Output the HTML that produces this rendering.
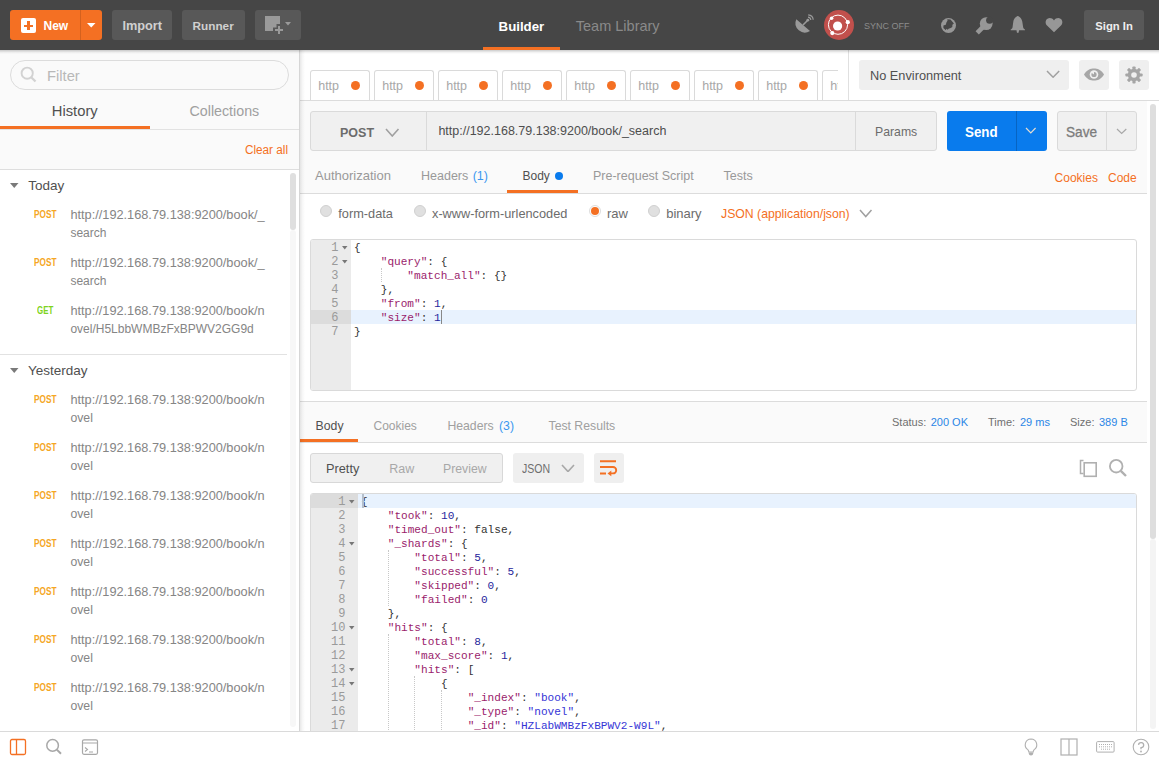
<!DOCTYPE html><html><head><meta charset="utf-8"><style>*{margin:0;padding:0;box-sizing:border-box}
html,body{width:1159px;height:762px;overflow:hidden;background:#fff;font-family:"Liberation Sans",sans-serif}
body div,body span,body svg{position:absolute}
.t{white-space:nowrap;line-height:1}
.ln{font-family:"Liberation Mono",monospace;font-size:12px;line-height:14px;color:#9a9a9a;text-align:right}
.code{font-family:"Liberation Mono",monospace;font-size:11.10px;line-height:14px;color:#333;white-space:pre}
.code span{position:static}
</style></head><body><div style="left:0px;top:0px;width:1159px;height:50px;background:#464646"></div>
<div style="left:10px;top:10px;width:92px;height:30px;background:#f47023;border-radius:3px"></div>
<div style="left:79.5px;top:10px;width:1px;height:30px;background:rgba(0,0,0,.13)"></div>
<div style="left:21px;top:18px;width:15px;height:15px;background:#fff;border-radius:2px"></div>
<div style="left:24px;top:24.5px;width:9px;height:2.6px;background:#f47023"></div>
<div style="left:27.2px;top:21.2px;width:2.6px;height:9px;background:#f47023"></div>
<svg style="left:87px;top:23px" width="9" height="5"><path d="M0 0H8.5L4.25 4.5Z" fill="#fff"/></svg>
<span class="t" style="left:43.50px;top:20.00px;font-size:12.00px;font-weight:bold;color:#fff;">New</span>
<div style="left:112px;top:10px;width:60px;height:30px;background:#585858;border-radius:3px"></div>
<span class="t" style="left:122.40px;top:20.00px;font-size:12.75px;font-weight:bold;color:#d0d0d0;">Import</span>
<div style="left:182px;top:10px;width:63px;height:30px;background:#585858;border-radius:3px"></div>
<span class="t" style="left:192.60px;top:20.00px;font-size:11.75px;font-weight:bold;color:#d0d0d0;">Runner</span>
<div style="left:255px;top:10px;width:46px;height:30px;background:#585858;border-radius:3px"></div>
<svg style="left:255px;top:10px" width="46" height="30"><path d="M10 6H25V14H21.5V17.5H18V21H10Z" fill="#9a9a9a"/><path d="M20 20H28M24 16V24" stroke="#9a9a9a" stroke-width="2"/><path d="M30 12H36L33 15.5Z" fill="#9a9a9a"/></svg>
<span class="t" style="left:498.60px;top:20.00px;font-size:13.25px;font-weight:bold;color:#fff;">Builder</span>
<div style="left:483px;top:47px;width:77px;height:3px;background:#f47023"></div>
<span class="t" style="left:575.80px;top:19.00px;font-size:14.50px;color:#8a8a8a;">Team Library</span>
<svg style="left:793px;top:14px" width="22" height="22"><path d="M3.3 5.3A9.4 9.4 0 0 0 17 17Z" fill="#9a9a9a"/><path d="M10 11L14.5 6.5" stroke="#9a9a9a" stroke-width="1.6"/><circle cx="14.8" cy="6.2" r="1.4" fill="#9a9a9a"/><path d="M15 3.2A3 3 0 0 1 17.8 6M15.2 0.8A5.4 5.4 0 0 1 20.2 5.8" stroke="#9a9a9a" stroke-width="1.2" fill="none"/></svg>
<svg style="left:824px;top:10px" width="30" height="30"><circle cx="15" cy="15" r="15" fill="#c1504c"/><circle cx="14" cy="14.7" r="9.6" fill="none" stroke="#fff" stroke-width="1"/><circle cx="13.6" cy="16" r="4.6" fill="#fff"/><circle cx="7.6" cy="8.3" r="1.8" fill="#fff"/><circle cx="23.8" cy="12.2" r="2.1" fill="#fff"/><circle cx="8.3" cy="23.1" r="2.1" fill="#fff"/></svg>
<span class="t" style="left:864.00px;top:22.00px;font-size:9.00px;color:#8c8c8c;">SYNC OFF</span>
<svg style="left:940px;top:17px" width="17" height="17"><circle cx="8.5" cy="8.5" r="7.5" fill="#979797"/><path d="M7.3 2.2L10.5 2.4 13.9 6.4 12.4 7.8 12.3 10 10.7 11.1 8.6 11.8 7.6 12.8 6.3 11.8 5.9 13.3 3.4 11.1 3.4 8.6 5.8 7.8 6.5 5.3 7.5 3.8Z" fill="#464646"/></svg>
<svg style="left:974px;top:16px" width="20" height="20"><circle cx="12.2" cy="7.6" r="6.4" fill="#979797"/><path d="M10.5 9.5L3.2 16.8" stroke="#979797" stroke-width="4.6"/><circle cx="15.6" cy="4.3" r="3.5" fill="#464646"/></svg>
<svg style="left:1010px;top:15px" width="16" height="19"><path d="M7.8 1C9.6 1.3 12 4 12.3 6.8L13.2 12.4C13.5 13.6 14.4 14 15 14.4V15.3H0.7V14.4C1.3 14 2.2 13.6 2.5 12.4L3.3 6.8C3.6 4 6 1.3 7.8 1Z" fill="#979797"/><path d="M6.5 15H9.1L8.7 17.6Q7.8 18.4 6.9 17.6Z" fill="#979797"/></svg>
<svg style="left:1045px;top:17px" width="18" height="16"><path d="M9 15.2L2 8.5C0 6.5 0.3 3 2.5 1.7 4.6 0.5 7.3 1 9 3.5 10.7 1 13.4 0.5 15.5 1.7 17.7 3 18 6.5 16 8.5Z" fill="#979797"/></svg>
<div style="left:1084px;top:10px;width:60px;height:30px;background:#585858;border-radius:3px"></div>
<span class="t" style="left:1095.30px;top:21.00px;font-size:11.25px;font-weight:bold;color:#eeeeee;">Sign In</span>
<div style="left:0px;top:50px;width:299px;height:120px;background:#fafafa"></div>
<div style="left:10px;top:60px;width:279px;height:30px;border:1px solid #dcdcdc;border-radius:15px;background:#fafafa"></div>
<svg style="left:20px;top:66px" width="17" height="17"><circle cx="7.2" cy="7.2" r="5.6" fill="none" stroke="#d2d2d2" stroke-width="1.9"/><path d="M11.2 11.2L15.5 15.5" stroke="#d2d2d2" stroke-width="2.3"/></svg>
<span class="t" style="left:47.00px;top:69.00px;font-size:14.75px;color:#b8b8b8;">Filter</span>
<span class="t" style="left:51.80px;top:104.00px;font-size:14.75px;color:#505050;">History</span>
<span class="t" style="left:189.50px;top:104.00px;font-size:14.25px;color:#a0a0a0;">Collections</span>
<div style="left:0px;top:129px;width:299px;height:1px;background:#e2e2e2"></div>
<div style="left:0px;top:126px;width:150px;height:3px;background:#f47023"></div>
<span class="t" style="left:244.60px;top:144.00px;font-size:12.50px;color:#f47023;transform:scaleX(0.938);transform-origin:0 0;">Clear all</span>
<div style="left:0px;top:169px;width:299px;height:1px;background:#dedede"></div>
<div style="left:0px;top:170px;width:299px;height:561px;background:#fff"></div>
<div style="left:290px;top:230px;width:6px;height:497px;background:#f7f7f7;border-radius:3px"></div>
<div style="left:290px;top:173px;width:6px;height:57px;background:#dfdfdf;border-radius:3px"></div>
<svg style="left:10px;top:183.3px" width="9" height="6"><path d="M0 0H8.5L4.25 5Z" fill="#7a7a7a"/></svg>
<span class="t" style="left:28.30px;top:179.00px;font-size:13.50px;color:#505050;">Today</span>
<span class="t" style="left:33.90px;top:210.00px;font-size:10.00px;font-weight:bold;color:#f5a623;transform:scaleX(0.823);transform-origin:0 0;">POST</span>
<span class="t" style="left:70.40px;top:209.00px;font-size:12.75px;color:#858585;">http://192.168.79.138:9200/book/_</span>
<span class="t" style="left:70.40px;top:227.00px;font-size:12.00px;color:#858585;">search</span>
<span class="t" style="left:33.90px;top:258.00px;font-size:10.00px;font-weight:bold;color:#f5a623;transform:scaleX(0.823);transform-origin:0 0;">POST</span>
<span class="t" style="left:70.40px;top:257.00px;font-size:12.75px;color:#858585;">http://192.168.79.138:9200/book/_</span>
<span class="t" style="left:70.40px;top:275.00px;font-size:12.00px;color:#858585;">search</span>
<span class="t" style="left:36.80px;top:306.00px;font-size:10.00px;font-weight:bold;color:#7ed321;transform:scaleX(0.792);transform-origin:0 0;">GET</span>
<span class="t" style="left:70.40px;top:305.00px;font-size:12.75px;color:#858585;">http://192.168.79.138:9200/book/n</span>
<span class="t" style="left:70.40px;top:323.00px;font-size:12.00px;color:#858585;">ovel/H5LbbWMBzFxBPWV2GG9d</span>
<div style="left:0px;top:354px;width:287px;height:1px;background:#e2e2e2"></div>
<svg style="left:10px;top:368px" width="9" height="6"><path d="M0 0H8.5L4.25 5Z" fill="#7a7a7a"/></svg>
<span class="t" style="left:28.00px;top:364.00px;font-size:13.50px;color:#505050;">Yesterday</span>
<span class="t" style="left:33.90px;top:395.00px;font-size:10.00px;font-weight:bold;color:#f5a623;transform:scaleX(0.823);transform-origin:0 0;">POST</span>
<span class="t" style="left:70.40px;top:394.00px;font-size:12.75px;color:#858585;">http://192.168.79.138:9200/book/n</span>
<span class="t" style="left:70.40px;top:412.00px;font-size:12.25px;color:#858585;">ovel</span>
<span class="t" style="left:33.90px;top:443.00px;font-size:10.00px;font-weight:bold;color:#f5a623;transform:scaleX(0.823);transform-origin:0 0;">POST</span>
<span class="t" style="left:70.40px;top:442.00px;font-size:12.75px;color:#858585;">http://192.168.79.138:9200/book/n</span>
<span class="t" style="left:70.40px;top:460.00px;font-size:12.25px;color:#858585;">ovel</span>
<span class="t" style="left:33.90px;top:491.00px;font-size:10.00px;font-weight:bold;color:#f5a623;transform:scaleX(0.823);transform-origin:0 0;">POST</span>
<span class="t" style="left:70.40px;top:490.00px;font-size:12.75px;color:#858585;">http://192.168.79.138:9200/book/n</span>
<span class="t" style="left:70.40px;top:508.00px;font-size:12.25px;color:#858585;">ovel</span>
<span class="t" style="left:33.90px;top:539.00px;font-size:10.00px;font-weight:bold;color:#f5a623;transform:scaleX(0.823);transform-origin:0 0;">POST</span>
<span class="t" style="left:70.40px;top:538.00px;font-size:12.75px;color:#858585;">http://192.168.79.138:9200/book/n</span>
<span class="t" style="left:70.40px;top:556.00px;font-size:12.25px;color:#858585;">ovel</span>
<span class="t" style="left:33.90px;top:587.00px;font-size:10.00px;font-weight:bold;color:#f5a623;transform:scaleX(0.823);transform-origin:0 0;">POST</span>
<span class="t" style="left:70.40px;top:586.00px;font-size:12.75px;color:#858585;">http://192.168.79.138:9200/book/n</span>
<span class="t" style="left:70.40px;top:604.00px;font-size:12.25px;color:#858585;">ovel</span>
<span class="t" style="left:33.90px;top:635.00px;font-size:10.00px;font-weight:bold;color:#f5a623;transform:scaleX(0.823);transform-origin:0 0;">POST</span>
<span class="t" style="left:70.40px;top:634.00px;font-size:12.75px;color:#858585;">http://192.168.79.138:9200/book/n</span>
<span class="t" style="left:70.40px;top:652.00px;font-size:12.25px;color:#858585;">ovel</span>
<span class="t" style="left:33.90px;top:683.00px;font-size:10.00px;font-weight:bold;color:#f5a623;transform:scaleX(0.823);transform-origin:0 0;">POST</span>
<span class="t" style="left:70.40px;top:682.00px;font-size:12.75px;color:#858585;">http://192.168.79.138:9200/book/n</span>
<span class="t" style="left:70.40px;top:700.00px;font-size:12.25px;color:#858585;">ovel</span>
<div style="left:300px;top:50px;width:859px;height:50px;background:#fff"></div>
<div style="left:300px;top:50px;width:538px;height:51px;overflow:hidden">
<div style="left:10px;top:20px;width:60px;height:31px;border:1px solid #dadada;border-bottom:none;border-radius:3px 3px 0 0;background:#fff"></div>
<div style="left:51px;top:31px;width:9px;height:9px;border-radius:50%;background:#f47023"></div>
<span class="t" style="left:18.20px;top:30.00px;font-size:12.50px;color:#a8a8a8;">http</span>
<div style="left:74px;top:20px;width:60px;height:31px;border:1px solid #dadada;border-bottom:none;border-radius:3px 3px 0 0;background:#fff"></div>
<div style="left:115px;top:31px;width:9px;height:9px;border-radius:50%;background:#f47023"></div>
<span class="t" style="left:82.20px;top:30.00px;font-size:12.50px;color:#a8a8a8;">http</span>
<div style="left:138px;top:20px;width:60px;height:31px;border:1px solid #dadada;border-bottom:none;border-radius:3px 3px 0 0;background:#fff"></div>
<div style="left:179px;top:31px;width:9px;height:9px;border-radius:50%;background:#f47023"></div>
<span class="t" style="left:146.20px;top:30.00px;font-size:12.50px;color:#a8a8a8;">http</span>
<div style="left:202px;top:20px;width:60px;height:31px;border:1px solid #dadada;border-bottom:none;border-radius:3px 3px 0 0;background:#fff"></div>
<div style="left:243px;top:31px;width:9px;height:9px;border-radius:50%;background:#f47023"></div>
<span class="t" style="left:210.20px;top:30.00px;font-size:12.50px;color:#a8a8a8;">http</span>
<div style="left:266px;top:20px;width:60px;height:31px;border:1px solid #dadada;border-bottom:none;border-radius:3px 3px 0 0;background:#fff"></div>
<div style="left:307px;top:31px;width:9px;height:9px;border-radius:50%;background:#f47023"></div>
<span class="t" style="left:274.20px;top:30.00px;font-size:12.50px;color:#a8a8a8;">http</span>
<div style="left:330px;top:20px;width:60px;height:31px;border:1px solid #dadada;border-bottom:none;border-radius:3px 3px 0 0;background:#fff"></div>
<div style="left:371px;top:31px;width:9px;height:9px;border-radius:50%;background:#f47023"></div>
<span class="t" style="left:338.20px;top:30.00px;font-size:12.50px;color:#a8a8a8;">http</span>
<div style="left:394px;top:20px;width:60px;height:31px;border:1px solid #dadada;border-bottom:none;border-radius:3px 3px 0 0;background:#fff"></div>
<div style="left:435px;top:31px;width:9px;height:9px;border-radius:50%;background:#f47023"></div>
<span class="t" style="left:402.20px;top:30.00px;font-size:12.50px;color:#a8a8a8;">http</span>
<div style="left:458px;top:20px;width:60px;height:31px;border:1px solid #dadada;border-bottom:none;border-radius:3px 3px 0 0;background:#fff"></div>
<div style="left:499px;top:31px;width:9px;height:9px;border-radius:50%;background:#f47023"></div>
<span class="t" style="left:466.20px;top:30.00px;font-size:12.50px;color:#a8a8a8;">http</span>
<div style="left:522px;top:20px;width:60px;height:31px;border:1px solid #dadada;border-bottom:none;border-radius:3px 3px 0 0;background:#fff"></div>
<div style="left:563px;top:31px;width:9px;height:9px;border-radius:50%;background:#f47023"></div>
<span class="t" style="left:530.20px;top:30.00px;font-size:12.50px;color:#a8a8a8;">http</span>
</div>
<div style="left:300px;top:100px;width:859px;height:1px;background:#dcdcdc"></div>
<div style="left:848px;top:50px;width:1px;height:50px;background:#e0e0e0"></div>
<div style="left:859px;top:60px;width:210px;height:30px;background:#efefef;border-radius:3px"></div>
<span class="t" style="left:870.00px;top:70.00px;font-size:12.75px;color:#505050;">No Environment</span>
<svg style="left:1046.3px;top:70px" width="14.2" height="8.2"><path d="M1 1L7.1 7.2L13.2 1" fill="none" stroke="#a0a0a0" stroke-width="1.5"/></svg>
<div style="left:1079px;top:60px;width:30px;height:30px;background:#efefef;border-radius:3px"></div>
<svg style="left:1083px;top:68px" width="22" height="13"><path d="M1 6.5C4 1.5 7.5 0.5 11 0.5S18 1.5 21 6.5C18 11.5 14.5 12.5 11 12.5S4 11.5 1 6.5Z" fill="#a6a6a6"/><circle cx="11" cy="6.5" r="4.3" fill="#efefef"/><circle cx="11" cy="6.5" r="2.6" fill="#a6a6a6"/><path d="M11 6.5V3.2A3.3 3.3 0 0 0 8 4.5Z" fill="#efefef"/></svg>
<div style="left:1119px;top:60px;width:30px;height:30px;background:#efefef;border-radius:3px"></div>
<svg style="left:1125px;top:66px" width="18" height="18"><g transform="translate(9 9)" fill="#a6a6a6"><circle r="6.2"/><rect x="-1.6" y="-8.6" width="3.2" height="4" rx="0.8" transform="rotate(0)"/><rect x="-1.6" y="-8.6" width="3.2" height="4" rx="0.8" transform="rotate(45)"/><rect x="-1.6" y="-8.6" width="3.2" height="4" rx="0.8" transform="rotate(90)"/><rect x="-1.6" y="-8.6" width="3.2" height="4" rx="0.8" transform="rotate(135)"/><rect x="-1.6" y="-8.6" width="3.2" height="4" rx="0.8" transform="rotate(180)"/><rect x="-1.6" y="-8.6" width="3.2" height="4" rx="0.8" transform="rotate(225)"/><rect x="-1.6" y="-8.6" width="3.2" height="4" rx="0.8" transform="rotate(270)"/><rect x="-1.6" y="-8.6" width="3.2" height="4" rx="0.8" transform="rotate(315)"/><circle r="2.8" fill="#efefef"/></g></svg>
<div style="left:300px;top:101px;width:847px;height:92px;background:#fafafa"></div>
<div style="left:310px;top:111px;width:627px;height:40px;background:#f0f0f0;border:1px solid #dadada;border-radius:3px"></div>
<div style="left:426px;top:111px;width:1px;height:40px;background:#dadada"></div>
<div style="left:855px;top:111px;width:1px;height:40px;background:#dadada"></div>
<span class="t" style="left:340.00px;top:127.00px;font-size:12.50px;font-weight:bold;color:#6c6c6c;">POST</span>
<svg style="left:385px;top:127.5px" width="14.5" height="9"><path d="M1 1L7.25 8L13.5 1" fill="none" stroke="#a0a0a0" stroke-width="1.6"/></svg>
<span class="t" style="left:438.40px;top:125.00px;font-size:12.50px;color:#4e4e4e;">http://192.168.79.138:9200/book/_search</span>
<span class="t" style="left:875.00px;top:126.00px;font-size:12.25px;color:#6c6c6c;">Params</span>
<div style="left:947px;top:111px;width:100px;height:40px;background:#097bed;border-radius:3px"></div>
<div style="left:1016px;top:111px;width:1px;height:40px;background:rgba(0,0,0,.18)"></div>
<span class="t" style="left:965.00px;top:125.00px;font-size:14.00px;font-weight:bold;color:#fff;transform:scaleX(0.953);transform-origin:0 0;">Send</span>
<svg style="left:1024.8px;top:126.8px" width="11.6" height="6.8"><path d="M1 1L5.8 5.8L10.6 1" fill="none" stroke="#e6ddd0" stroke-width="1.2"/></svg>
<div style="left:1057px;top:111px;width:80px;height:40px;background:#f0f0f0;border:1px solid #dadada;border-radius:3px"></div>
<div style="left:1106px;top:111px;width:1px;height:40px;background:#dadada"></div>
<span class="t" style="left:1066.40px;top:126.00px;font-size:13.75px;color:#7c7c7c;transform:scaleX(0.992);transform-origin:0 0;-webkit-text-stroke:0.3px #7c7c7c;">Save</span>
<svg style="left:1116px;top:128px" width="11.3" height="6.5"><path d="M1 1L5.65 5.5L10.3 1" fill="none" stroke="#a8a8a8" stroke-width="1.2"/></svg>
<span class="t" style="left:1054.60px;top:172.00px;font-size:12.00px;color:#f47023;">Cookies</span>
<span class="t" style="left:1108.00px;top:172.00px;font-size:12.00px;color:#f47023;">Code</span>
<span class="t" style="left:315.00px;top:169.00px;font-size:13.00px;color:#999999;">Authorization</span>
<span class="t" style="left:421.00px;top:170.00px;font-size:12.50px;color:#999999;">Headers</span>
<span class="t" style="left:472.70px;top:170.00px;font-size:12.50px;color:#3a98f0;">(1)</span>
<span class="t" style="left:522.50px;top:170.00px;font-size:12.00px;color:#505050;">Body</span>
<div style="left:554.6px;top:172px;width:8px;height:8px;background:#097bed;border-radius:50%"></div>
<span class="t" style="left:593.00px;top:170.00px;font-size:12.50px;color:#999999;">Pre-request Script</span>
<span class="t" style="left:723.50px;top:170.00px;font-size:12.50px;color:#999999;">Tests</span>
<div style="left:507px;top:190px;width:71px;height:3px;background:#f47023"></div>
<div style="left:300px;top:193px;width:847px;height:1px;background:#dcdcdc"></div>
<div style="left:320px;top:205px;width:12px;height:12px;border-radius:50%;background:#e0e0e0;border:1px solid #d0d0d0"></div>
<div style="left:414px;top:205px;width:12px;height:12px;border-radius:50%;background:#e0e0e0;border:1px solid #d0d0d0"></div>
<div style="left:589px;top:205px;width:12px;height:12px;border-radius:50%;background:#fff;border:1px solid #ddd"></div>
<div style="left:591px;top:207px;width:8px;height:8px;border-radius:50%;background:#f47023"></div>
<div style="left:648px;top:205px;width:12px;height:12px;border-radius:50%;background:#e0e0e0;border:1px solid #d0d0d0"></div>
<span class="t" style="left:338.30px;top:208.00px;font-size:12.75px;color:#6c6c6c;">form-data</span>
<span class="t" style="left:432.00px;top:208.00px;font-size:12.75px;color:#6c6c6c;">x-www-form-urlencoded</span>
<span class="t" style="left:607.00px;top:207.00px;font-size:13.00px;color:#6c6c6c;">raw</span>
<span class="t" style="left:666.20px;top:207.00px;font-size:13.00px;color:#6c6c6c;">binary</span>
<span class="t" style="left:721.00px;top:208.00px;font-size:12.25px;color:#f47023;">JSON (application/json)</span>
<svg style="left:859px;top:209.3px" width="13.5" height="8.5"><path d="M1 1L6.75 7.5L12.5 1" fill="none" stroke="#a0a0a0" stroke-width="1.5"/></svg>
<div style="left:310px;top:239px;width:827px;height:152px;border:1px solid #dadada;border-radius:3px;background:#fff;overflow:hidden">
<div style="left:0;top:0;width:40px;height:152px;background:#ebebeb"></div>
<div style="left:0;top:70px;width:40px;height:14px;background:#dcdcdc"></div>
<div style="left:40px;top:70px;width:827px;height:14px;background:#e8f2fe"></div>
<div style="left:69.6px;top:28px;width:0;height:14px;border-left:1px dotted #c8c8c8"></div>
<div class="ln" style="left:0;top:1px;width:27.5px">1</div>
<svg style="left:30.7px;top:6px" width="6" height="4"><path d="M0 0H5.5L2.75 3.6Z" fill="#777"/></svg>
<div class="code" style="left:43.1px;top:1px">{</div>
<div class="ln" style="left:0;top:15px;width:27.5px">2</div>
<svg style="left:30.7px;top:20px" width="6" height="4"><path d="M0 0H5.5L2.75 3.6Z" fill="#777"/></svg>
<div class="code" style="left:43.1px;top:15px">    <span style="color:#9a1c6c">"query"</span>: {</div>
<div class="ln" style="left:0;top:29px;width:27.5px">3</div>
<div class="code" style="left:43.1px;top:29px">        <span style="color:#9a1c6c">"match_all"</span>: {}</div>
<div class="ln" style="left:0;top:43px;width:27.5px">4</div>
<div class="code" style="left:43.1px;top:43px">    },</div>
<div class="ln" style="left:0;top:57px;width:27.5px">5</div>
<div class="code" style="left:43.1px;top:57px">    <span style="color:#9a1c6c">"from"</span>: <span style="color:#26269c">1</span>,</div>
<div class="ln" style="left:0;top:71px;width:27.5px">6</div>
<div class="code" style="left:43.1px;top:71px">    <span style="color:#9a1c6c">"size"</span>: <span style="color:#26269c">1</span></div>
<div class="ln" style="left:0;top:85px;width:27.5px">7</div>
<div class="code" style="left:43.1px;top:85px">}</div>
</div>
<div style="left:441px;top:310px;width:1px;height:14px;background:#888"></div>
<div style="left:300px;top:401px;width:847px;height:1px;background:#dcdcdc"></div>
<div style="left:300px;top:402px;width:847px;height:40px;background:#fafafa"></div>
<div style="left:300px;top:442px;width:847px;height:1px;background:#dcdcdc"></div>
<div style="left:300px;top:439px;width:58px;height:3px;background:#f47023"></div>
<span class="t" style="left:315.60px;top:420.00px;font-size:12.25px;color:#505050;">Body</span>
<span class="t" style="left:373.50px;top:420.00px;font-size:12.00px;color:#a0a0a0;">Cookies</span>
<span class="t" style="left:447.40px;top:420.00px;font-size:12.25px;color:#a0a0a0;">Headers</span>
<span class="t" style="left:499.00px;top:420.00px;font-size:12.25px;color:#3a98f0;">(3)</span>
<span class="t" style="left:548.50px;top:420.00px;font-size:12.25px;color:#a0a0a0;">Test Results</span>
<span class="t" style="left:892.00px;top:417.00px;font-size:11.00px;color:#707070;">Status:</span>
<span class="t" style="left:930.70px;top:417.00px;font-size:11.00px;color:#2b86e6;">200 OK</span>
<span class="t" style="left:988.00px;top:417.00px;font-size:11.00px;color:#707070;">Time:</span>
<span class="t" style="left:1020.00px;top:417.00px;font-size:11.00px;color:#2b86e6;">29 ms</span>
<span class="t" style="left:1070.00px;top:417.00px;font-size:11.00px;color:#707070;">Size:</span>
<span class="t" style="left:1099.00px;top:417.00px;font-size:11.00px;color:#2b86e6;">389 B</span>
<div style="left:310px;top:453px;width:193px;height:30px;background:#f0f0f0;border:1px solid #d8d8d8;border-radius:3px"></div>
<span class="t" style="left:326.00px;top:463.00px;font-size:12.75px;color:#505050;">Pretty</span>
<span class="t" style="left:389.20px;top:463.00px;font-size:12.50px;color:#a8a8a8;">Raw</span>
<span class="t" style="left:443.00px;top:463.00px;font-size:12.25px;color:#a8a8a8;">Preview</span>
<div style="left:513px;top:453px;width:71px;height:30px;background:#efefef;border-radius:3px"></div>
<span class="t" style="left:522.30px;top:463.00px;font-size:12.00px;color:#6e6e6e;transform:scaleX(0.879);transform-origin:0 0;">JSON</span>
<svg style="left:561.3px;top:463.6px" width="14" height="8.6"><path d="M1 1L7.0 7.6L13 1" fill="none" stroke="#a8a8a8" stroke-width="1.6"/></svg>
<div style="left:594px;top:453px;width:30px;height:30px;background:#efefef;border-radius:3px"></div>
<svg style="left:594px;top:453px" width="30" height="30"><path d="M6 8.3H22M6 14H19A3.2 3.2 0 0 1 19 20.4H16.5M6 20.5H12" fill="none" stroke="#f47023" stroke-width="1.9"/><path d="M13.5 20.4L17.3 17.6V23.2Z" fill="#f47023"/></svg>
<svg style="left:1079px;top:458px" width="20" height="20"><path d="M4.5 2.5H1.5V15.5H4.5" fill="none" stroke="#b0b0b0" stroke-width="1.5"/><rect x="5.2" y="4.8" width="12" height="13.5" fill="none" stroke="#b0b0b0" stroke-width="1.6"/></svg>
<svg style="left:1108px;top:458px" width="20" height="20"><circle cx="8.2" cy="8.2" r="6.3" fill="none" stroke="#b0b0b0" stroke-width="1.8"/><path d="M12.8 12.8L18 18" stroke="#b0b0b0" stroke-width="2.4"/></svg>
<div style="left:310px;top:493px;width:827px;height:260px;border:1px solid #dadada;border-radius:3px;background:#fff;overflow:hidden">
<div style="left:0;top:0;width:47px;height:260px;background:#ebebeb"></div>
<div style="left:0;top:0px;width:47px;height:14px;background:#dcdcdc"></div>
<div style="left:47px;top:0px;width:827px;height:14px;background:#e8f2fe"></div>
<div style="left:76.6px;top:56px;width:0;height:56px;border-left:1px dotted #c8c8c8"></div>
<div style="left:76.6px;top:140px;width:0;height:112px;border-left:1px dotted #c8c8c8"></div>
<div style="left:103.3px;top:182px;width:0;height:70px;border-left:1px dotted #c8c8c8"></div>
<div style="left:129.9px;top:196px;width:0;height:56px;border-left:1px dotted #c8c8c8"></div>
<div class="ln" style="left:0;top:1px;width:34.5px">1</div>
<svg style="left:37.7px;top:6px" width="6" height="4"><path d="M0 0H5.5L2.75 3.6Z" fill="#777"/></svg>
<div class="code" style="left:50.1px;top:1px">{</div>
<div class="ln" style="left:0;top:15px;width:34.5px">2</div>
<div class="code" style="left:50.1px;top:15px">    <span style="color:#9a1c6c">"took"</span>: <span style="color:#26269c">10</span>,</div>
<div class="ln" style="left:0;top:29px;width:34.5px">3</div>
<div class="code" style="left:50.1px;top:29px">    <span style="color:#9a1c6c">"timed_out"</span>: false,</div>
<div class="ln" style="left:0;top:43px;width:34.5px">4</div>
<svg style="left:37.7px;top:48px" width="6" height="4"><path d="M0 0H5.5L2.75 3.6Z" fill="#777"/></svg>
<div class="code" style="left:50.1px;top:43px">    <span style="color:#9a1c6c">"_shards"</span>: {</div>
<div class="ln" style="left:0;top:57px;width:34.5px">5</div>
<div class="code" style="left:50.1px;top:57px">        <span style="color:#9a1c6c">"total"</span>: <span style="color:#26269c">5</span>,</div>
<div class="ln" style="left:0;top:71px;width:34.5px">6</div>
<div class="code" style="left:50.1px;top:71px">        <span style="color:#9a1c6c">"successful"</span>: <span style="color:#26269c">5</span>,</div>
<div class="ln" style="left:0;top:85px;width:34.5px">7</div>
<div class="code" style="left:50.1px;top:85px">        <span style="color:#9a1c6c">"skipped"</span>: <span style="color:#26269c">0</span>,</div>
<div class="ln" style="left:0;top:99px;width:34.5px">8</div>
<div class="code" style="left:50.1px;top:99px">        <span style="color:#9a1c6c">"failed"</span>: <span style="color:#26269c">0</span></div>
<div class="ln" style="left:0;top:113px;width:34.5px">9</div>
<div class="code" style="left:50.1px;top:113px">    },</div>
<div class="ln" style="left:0;top:127px;width:34.5px">10</div>
<svg style="left:37.7px;top:132px" width="6" height="4"><path d="M0 0H5.5L2.75 3.6Z" fill="#777"/></svg>
<div class="code" style="left:50.1px;top:127px">    <span style="color:#9a1c6c">"hits"</span>: {</div>
<div class="ln" style="left:0;top:141px;width:34.5px">11</div>
<div class="code" style="left:50.1px;top:141px">        <span style="color:#9a1c6c">"total"</span>: <span style="color:#26269c">8</span>,</div>
<div class="ln" style="left:0;top:155px;width:34.5px">12</div>
<div class="code" style="left:50.1px;top:155px">        <span style="color:#9a1c6c">"max_score"</span>: <span style="color:#26269c">1</span>,</div>
<div class="ln" style="left:0;top:169px;width:34.5px">13</div>
<svg style="left:37.7px;top:174px" width="6" height="4"><path d="M0 0H5.5L2.75 3.6Z" fill="#777"/></svg>
<div class="code" style="left:50.1px;top:169px">        <span style="color:#9a1c6c">"hits"</span>: [</div>
<div class="ln" style="left:0;top:183px;width:34.5px">14</div>
<svg style="left:37.7px;top:188px" width="6" height="4"><path d="M0 0H5.5L2.75 3.6Z" fill="#777"/></svg>
<div class="code" style="left:50.1px;top:183px">            {</div>
<div class="ln" style="left:0;top:197px;width:34.5px">15</div>
<div class="code" style="left:50.1px;top:197px">                <span style="color:#9a1c6c">"_index"</span>: <span style="color:#3636d6">"book"</span>,</div>
<div class="ln" style="left:0;top:211px;width:34.5px">16</div>
<div class="code" style="left:50.1px;top:211px">                <span style="color:#9a1c6c">"_type"</span>: <span style="color:#3636d6">"novel"</span>,</div>
<div class="ln" style="left:0;top:225px;width:34.5px">17</div>
<div class="code" style="left:50.1px;top:225px">                <span style="color:#9a1c6c">"_id"</span>: <span style="color:#3636d6">"HZLabWMBzFxBPWV2-W9L"</span>,</div>
<div class="ln" style="left:0;top:239px;width:34.5px">18</div>
<div class="code" style="left:50.1px;top:239px">                <span style="color:#9a1c6c">"_score"</span>: <span style="color:#26269c">1</span>,</div>
</div>
<div style="left:362px;top:494px;width:2px;height:14px;background:#b4bfcc"></div>
<div style="left:1150px;top:539px;width:6px;height:190px;background:#f4f4f4;border-radius:3px"></div>
<div style="left:1150px;top:104px;width:6px;height:435px;background:#dedede;border-radius:3px"></div>
<div style="left:299px;top:50px;width:1px;height:681px;background:#d6d6d6"></div>
<div style="left:300px;top:50px;width:5px;height:681px;background:linear-gradient(90deg,rgba(0,0,0,.09),rgba(0,0,0,.03) 50%,rgba(0,0,0,0))"></div>
<div style="left:0px;top:50px;width:1159px;height:4px;background:linear-gradient(rgba(0,0,0,.2),rgba(0,0,0,.05) 60%,rgba(0,0,0,0))"></div>
<div style="left:0px;top:731px;width:1159px;height:31px;background:#fff"></div>
<div style="left:0px;top:731px;width:1159px;height:1px;background:#dadada"></div>
<svg style="left:9px;top:738px" width="18" height="18"><rect x="1.5" y="1.5" width="15" height="15" rx="1.5" fill="none" stroke="#f47023" stroke-width="1.3"/><path d="M7.5 1.5V16.5" stroke="#f47023" stroke-width="1.3"/></svg>
<svg style="left:45px;top:738px" width="18" height="18"><circle cx="7.6" cy="7.4" r="5.8" fill="none" stroke="#a8a8a8" stroke-width="1.5"/><path d="M11.8 11.6L16 15.8" stroke="#a8a8a8" stroke-width="2"/></svg>
<svg style="left:81px;top:738px" width="18" height="18"><rect x="1.5" y="1.8" width="15" height="14.5" rx="1.5" fill="none" stroke="#a8a8a8" stroke-width="1.2"/><path d="M1.5 5H16.5M4 9.5L6.5 11.5 4 13.5M8 14H12" fill="none" stroke="#a8a8a8" stroke-width="1.1"/></svg>
<svg style="left:1023px;top:738px" width="16" height="18"><path d="M8 1A5.8 5.8 0 0 0 4.8 11.6C5.5 12.3 5.8 13 5.8 14H10.2C10.2 13 10.5 12.3 11.2 11.6A5.8 5.8 0 0 0 8 1Z" fill="none" stroke="#b0b0b0" stroke-width="1.1"/><path d="M5.8 14.5H10.2V15.5A2.2 2 0 0 1 5.8 15.5Z" fill="#b0b0b0"/></svg>
<svg style="left:1060px;top:738px" width="18" height="18"><rect x="1" y="1" width="16" height="16" fill="none" stroke="#b0b0b0" stroke-width="1.2"/><path d="M9 1V17" stroke="#b0b0b0" stroke-width="1.2"/></svg>
<svg style="left:1096px;top:741px" width="19" height="12"><rect x="0.6" y="0.6" width="17.5" height="10.5" rx="1" fill="none" stroke="#b0b0b0" stroke-width="1"/><path d="M3 3.5H16M3 5.8H16M5 8.2H14" stroke="#b0b0b0" stroke-width="1" stroke-dasharray="1 1"/></svg>
<svg style="left:1132px;top:738px" width="18" height="18"><circle cx="9" cy="9" r="7.8" fill="none" stroke="#b0b0b0" stroke-width="1.1"/><path d="M6.5 6.8A2.6 2.5 0 1 1 9 9.6V11.2" fill="none" stroke="#b0b0b0" stroke-width="1.3"/><circle cx="9" cy="13.5" r="0.9" fill="#b0b0b0"/></svg></body></html>
